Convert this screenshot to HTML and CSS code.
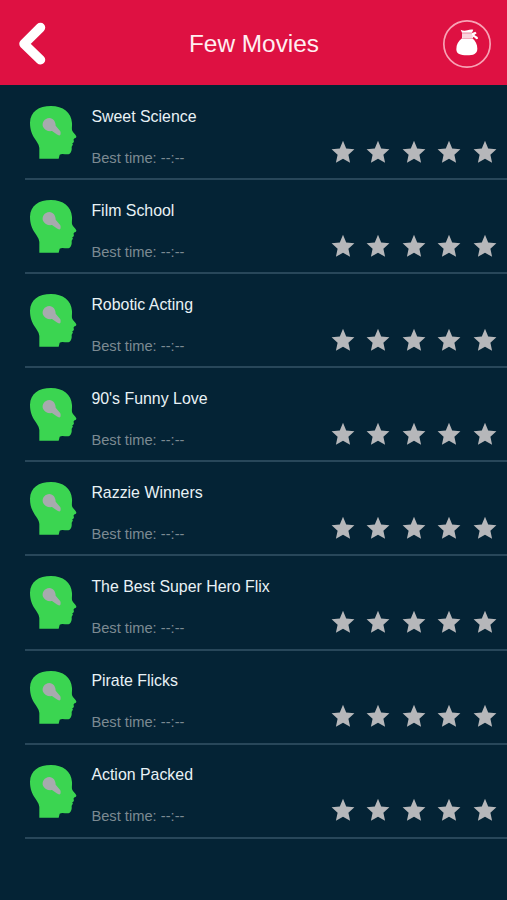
FILE: index.html
```html
<!DOCTYPE html>
<html lang="en">
<head>
<meta charset="utf-8">
<title>Few Movies</title>
<link rel="stylesheet" href="styles.css">
</head>
<body>
<svg class="defs" aria-hidden="true">
  <symbol id="head" viewBox="0 0 144 165">
    <path class="face" d="M31 161V129C30 107 3 98 3 53C4 20 29 3 66 3C102 3 127 22 129 54C130 64 127 71 130 78C134 85 143 91 142 96C141 100 135 99 134 103C133 107 136 108 134 112C132 114 130 114 130 116C134 119 129 121 128 126C129 135 127 143 121 147C113 150 99 144 92 149L89 161Z"/>
    <path class="bulb" d="M61 39C73 40 80 49 80 62L94 79Q96 84 94 90Q90 93 83 88L69 78C57 80 46 74 42 65C38 53 46 40 61 39Z"/>
  </symbol>
  <symbol id="star" viewBox="0 0 24 24">
    <path d="M12 .8L15.2 8.5L23.4 9.2L17.4 14.8L19.1 22.8L12 18.7L4.9 22.8L6.6 14.8L.6 9.2L8.8 8.5Z"/>
  </symbol>
</svg>
<header class="bar">
  <svg class="back" viewBox="0 0 28 44"><path d="M22.5 5.5L6 21.8L22.5 37.8"/></svg>
  <h1>Few Movies</h1>
  <svg class="purse" viewBox="0 0 144 144">
    <circle cx="72" cy="72" r="69.5"/>
    <path d="M53 29C59 33 67 33 73 31C80 28 85 28 91 29L87 38H57ZM57 40H86L97 35L101 40L94 45L104 51L105 56L100 58L92 50L89 54H57ZM57 55H88C97 62 103 74 103 86C103 101 91 106 72 106C52 106 40 102 40 88C40 73 46 63 57 55Z"/>
    <path class="cord" d="M57 42H87M57 48H89M58 54H88"/>
  </svg>
</header>
<main id="list" class="list"></main>
<script src="app.js"></script>
</body>
</html>
```
FILE: styles.css
```css
* { box-sizing: border-box; }
html { background: #042335; }
body {
  margin: 0;
  height: 900px;
  overflow: hidden;
  background: #042335;
  font-family: "Liberation Sans", Arial, sans-serif;
}
.defs { display: none; }
.bar {
  display: grid;
  grid-template-columns: 48px 1fr 48px;
  align-items: center;
  height: 85px;
  padding: 2px 16px 0 17px;
  background: #de1142;
  color: #fff;
}
.bar h1 {
  margin: 0;
  font-size: 24.4px;
  font-weight: 400;
  line-height: 30px;
  text-align: center;
  color: #ffeef1;
}
.back { width: 28px; height: 44px; margin-left: 1px; }
.back path {
  fill: none;
  stroke: #fff;
  stroke-width: 9.5;
  stroke-linecap: round;
  stroke-linejoin: round;
}
.purse { width: 48px; height: 48px; }
.purse path { fill: #fff; }
.purse circle { fill: none; stroke: #f8a3b5; stroke-width: 5; }
.purse .cord { fill: none; stroke: #ef8199; stroke-width: 2; }
.list { padding: 1px 0 0 25px; }
.row {
  display: grid;
  grid-template-columns: 66.4px 1fr auto;
  height: 94.1px;
  border-bottom: 2px solid #28475a;
}
.head { width: 48px; height: 55px; margin: 19px 0 0 4px; }
.face { fill: #3bd551; }
.bulb { fill: #a7aaae; }
.info { padding-top: 20.6px; }
.name, .time { margin: 0; line-height: 20px; white-space: nowrap; }
.name { font-size: 15.9px; color: #e9f2f6; }
.time { margin-top: 21px; font-size: 14.7px; color: #7c8a92; }
.stars { display: flex; gap: 11.4px; padding: 53.6px 10.5px 0 0; }
.stars svg { width: 24px; height: 24px; fill: #b6b7ba; }
```
FILE: app.js
```js
const packs = [
  "Sweet Science", "Film School", "Robotic Acting", "90's Funny Love",
  "Razzie Winners", "The Best Super Hero Flix", "Pirate Flicks", "Action Packed"
];
const star = '<svg><use href="#star"/></svg>';
document.getElementById("list").innerHTML = packs.map(name => `
  <section class="row">
    <svg class="head"><use href="#head"/></svg>
    <div class="info"><p class="name">${name}</p><p class="time">Best time: --:--</p></div>
    <div class="stars">${star.repeat(5)}</div>
  </section>`).join("");
```
